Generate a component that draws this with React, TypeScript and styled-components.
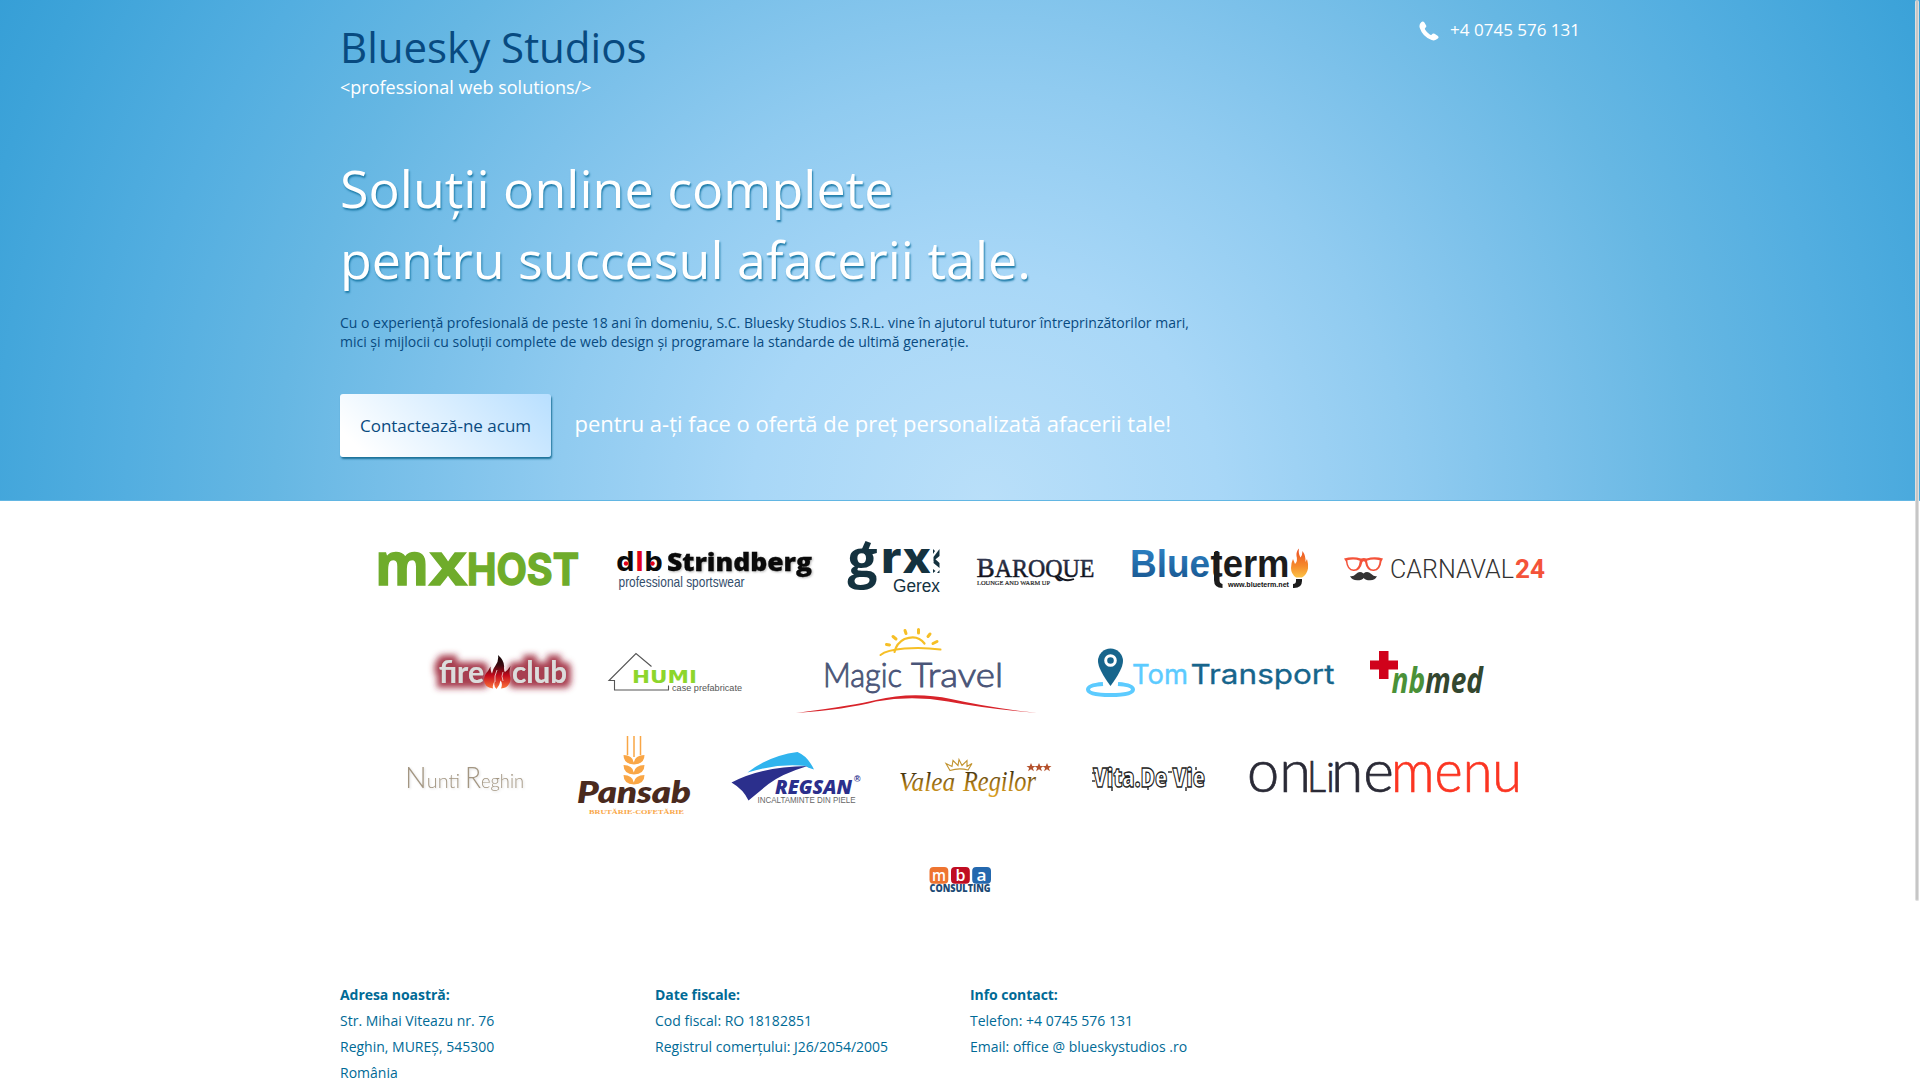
import React from "react";
import styled, { createGlobalStyle } from "styled-components";

const GlobalStyle = createGlobalStyle`
  *, *::before, *::after { box-sizing: border-box; }
  html, body { margin: 0; padding: 0; height: 100%; overflow: hidden; }
  body { font-family: "Open Sans", "Noto Sans", sans-serif; font-size: 14px; background: #fff; }
  h1, h2, h3, p, ul { margin: 0; padding: 0; font-weight: 400; }
`;

const Page = styled.div`
  height: 1080px;
  overflow: hidden;
  display: flex;
  flex-direction: column;
`;

const Container = styled.div`
  width: 1240px;
  margin: 0 auto;
`;

const Hero = styled.header`
  height: 501px;
  flex: none;
  border-bottom: 1px solid #62b6e3;
  background: radial-gradient(
    ellipse 1060px 1040px at 985px 500px,
    #b9dff9 0%,
    #a8d7f7 22%,
    #90cbf0 40%,
    #7cc1ea 53%,
    #66b7e3 67%,
    #53aee0 81%,
    #3da3d9 98%,
    #359ed6 106%
  );
`;

const TopBar = styled.div`
  display: flex;
  justify-content: space-between;
  align-items: flex-start;
  padding-top: 18px;
`;

const Brand = styled.div`
  display: flex;
  flex-direction: column;
`;

const BrandName = styled.div`
  font-size: 42px;
  line-height: 57px;
  color: #084a80;
`;

const Tagline = styled.div`
  font-size: 18px;
  line-height: 25px;
  color: #fff;
`;

const Phone = styled.div`
  display: flex;
  align-items: center;
  gap: 11px;
  font-size: 17px;
  line-height: 23px;
  color: #fff;
`;

const PhoneIcon = styled.svg`
  width: 20px;
  height: 20px;
  margin-top: 3px;
`;

const Headline = styled.h1`
  margin-top: 52px;
  font-size: 52px;
  line-height: 71px;
  color: #fff;
  text-shadow: 1px 2px 2px #1d7ba8;
`;

const Intro = styled.p`
  margin-top: 19px;
  font-size: 14px;
  line-height: 19px;
  color: #084a80;
`;

const Action = styled.div`
  display: flex;
  align-items: center;
  gap: 23.5px;
  margin-top: 43px;
`;

const ContactButton = styled.a`
  display: flex;
  align-items: center;
  justify-content: center;
  width: 211px;
  height: 63px;
  border-radius: 3px;
  font-size: 17px;
  color: #084a80;
  background: linear-gradient(45deg, #fff 10%, #b8dfff 100%);
  box-shadow: 1px 2px 2px #1c7198;
`;

const ActionText = styled.span`
  font-size: 22px;
  line-height: 30px;
  color: #fff;
  padding-bottom: 5px;
`;

const Clients = styled.section`
  display: flex;
  flex-direction: column;
  padding-top: 16px;
`;

const LogoRow = styled.div`
  display: flex;
  justify-content: center;
  gap: 35px;
  height: 104px;
`;

const Logo = styled.svg`
  display: block;
  flex: none;
  height: 104px;
  overflow: visible;
`;

const Footer = styled.footer`
  display: flex;
  padding-top: 49px;
  color: #006a96;
`;

const FooterColumn = styled.div`
  width: 315px;
  display: flex;
  flex-direction: column;
  line-height: 26px;
  font-size: 14px;
  white-space: nowrap;
`;

const FooterTitle = styled.h3`
  font-size: 14px;
  line-height: 26px;
  font-weight: 700;
  letter-spacing: -0.05px;
`;

const ScrollThumb = styled.div`
  position: fixed;
  top: 0;
  right: 1px;
  width: 4px;
  height: 901px;
  border-radius: 2px;
  background: #c6c6c6;
  border: 1px solid #dedede;
  border-top: 0;
`;

type WordProps = React.SVGProps<SVGTextElement> & { w: number; size: number; font?: string };

/* A word of a logo, fitted to the width w. */
const Word = ({ w, size, font = "Open Sans", children, ...rest }: WordProps) => (
  <text fontFamily={`"${font}", sans-serif`} fontSize={size} textLength={w} lengthAdjust="spacingAndGlyphs" {...rest}>
    {children}
  </text>
);

const MxHost = () => (
  <Logo width={205} viewBox="376 517 205 104">
    <g fill="#6fac2b" stroke="#6fac2b" strokeWidth="1.4">
      <Word x={375} y={585} w={54} size={58.500} fontWeight={700}>m</Word>
      <Word x={428} y={585} w={40} size={44} font="Inter" fontWeight={800}>X</Word>
      <Word x={467} y={585} w={112} size={44} font="Inter" fontWeight={700}>HOST</Word>
    </g>
  </Logo>
);

const Strindberg = () => (
  <Logo width={197} viewBox="616 517 197 104">
    <Word x={616} y={571} w={47} size={27} fontWeight={700} fill="#0a0a0a">
      d<tspan fill="#e2001a">l</tspan>b
    </Word>
    <circle cx="626" cy="563.5" r="2.2" fill="#e2001a" />
    <circle cx="652.5" cy="563.5" r="2.2" fill="#e2001a" />
    <Word x={667} y={570.5} w={145} size={25} fontWeight={800} fill="#0a0a0a" stroke="#0a0a0a" strokeWidth={0.3}
      style={{ filter: "drop-shadow(1px 1px 1px #bbb)" }}>
      Strindberg
    </Word>
    <Word x={618.5} y={587} w={126} size={14.5} font="Liberation Sans" fill="#344e6c">professional sportswear</Word>
  </Logo>
);

const Gerex = () => (
  <Logo width={93} viewBox="848 517 93 104">
    <g fill="#14323f">
      <Word x={847.5} y={577} w={30} size={52} fontWeight={700}>g</Word>
      <path d="M861 551l4.500-10 5.500 2-3.500 9z" />
      <Word x={881} y={573} w={50} size={44} font="Inter" fontWeight={800}>rx</Word>
      <path d="M933 549l2 2-2 3zM939.500 549v7l-6 5v-4zM934 558l5.500 5v5l-6-5zM933 573v-4l2.500 2zM937 573h2.500v-3z" />
      <Word x={893} y={591.5} w={47} size={18} font="Liberation Sans">Gerex</Word>
    </g>
  </Logo>
);

const Baroque = () => (
  <Logo width={120} viewBox="976 517 120 104">
    <defs>
      <linearGradient id="baroque" x1="0" y1="0" x2="0" y2="1">
        <stop offset="0.2" stopColor="#39405e" />
        <stop offset="0.8" stopColor="#0c0c10" />
      </linearGradient>
    </defs>
    <Word x={976.5} y={577} w={118} size={28} font="Liberation Serif" fill="url(#baroque)" stroke="#222638" strokeWidth={0.5}>
      B<tspan fontSize="24.5">AROQUE</tspan>
    </Word>
    <path d="M1058 576q7 6.500 16 3" fill="none" stroke="#16171f" strokeWidth="1.800" />
    <Word x={977} y={584.8} w={73} size={7} font="Liberation Serif" fill="#222" stroke="#222" strokeWidth={0.2}>LOUNGE AND WARM UP</Word>
  </Logo>
);

const Blueterm = () => (
  <Logo width={178} viewBox="1131 517 178 104">
    <defs>
      <linearGradient id="btBlue" x1="0" y1="0" x2="0" y2="1">
        <stop offset="0.1" stopColor="#2f83c5" />
        <stop offset="0.9" stopColor="#185690" />
      </linearGradient>
      <linearGradient id="btFlame" x1="0" y1="0" x2="0" y2="1">
        <stop offset="0" stopColor="#ec4e23" />
        <stop offset="0.6" stopColor="#f58a2c" />
        <stop offset="1" stopColor="#fcc244" />
      </linearGradient>
    </defs>
    <Word x={1130} y={577} w={80} size={38.5} font="Liberation Sans" fontWeight={700} fill="url(#btBlue)">Blue</Word>
    <Word x={1210.5} y={577} w={79} size={38} font="Liberation Sans" fontWeight={700} fill="#1c1c1c">term</Word>
    <path d="M1214 552h5.500v28q0 3.500 3 4v4q-8.500 0-8.500-8z" fill="#1c1c1c" />
    <Word x={1228} y={587} w={61} size={8} font="Liberation Sans" fontWeight={700} fill="#111">www.blueterm.net</Word>
    <path d="M1296 579h6v2q0 7-8 7h-1v-4q3 0 3-3z" fill="#1c1c1c" />
    <path d="M1296 577.500q-5-3.500-5-9.500 0-5 2-9l2 5q3-3 1.500-8-.5-4.500 2.500-7.500-1 5 1.500 9 2-2.500 2-6.500 3.500 5 3 11l1.500-3q1.500 5 1 9.500-1 6-6 9z" fill="url(#btFlame)" />
  </Logo>
);

const Carnaval = () => (
  <Logo width={200} viewBox="1344.5 517 200 104">
    <path
      d="M1344.500 558.500q9-2.500 17 0 3-1 5.500 0 8-2.500 16.500 0l-1.500 3q-1 9-7.500 9.500-7.500.5-9-9-1.300-1.500-2.600 0-2 9.500-9 9-6.500-.5-7.500-9.500z"
      fill="#f4533a"
    />
    <path d="M1347.800 560.300q7-2 12.500.5-1 8.700-6 8.700-6 0-6.500-9.200zM1367.500 560.800q6-2.500 12.700-.5-.6 9.200-6.500 9.200-5 0-6.200-8.700z" fill="#fff" />
    <path d="M1364 573.500q-4-3-7.500.5-3 3-6 2 2 4.300 7.200 4.300 5 0 6.500-2.300 1.500 2.300 6.500 2.300 5 0 6.800-4.300-2.500 1-5.700-2-4-3.500-7.800-.5z" fill="#333" />
    <Word x={1390.500} y={577.5} w={124} size={25.5} font="Roboto" fontWeight={300} fill="#333">CARNAVAL</Word>
    <Word x={1515.500} y={577.5} w={30} size={25.5} font="Roboto" fontWeight={700} fill="#f4533a">24</Word>
  </Logo>
);

const FireClub = () => (
  <Logo width={140} viewBox="433 621 140 104">
    <defs>
      <filter id="redGlow" x="-20%" y="-60%" width="140%" height="220%">
        <feMorphology in="SourceAlpha" operator="dilate" radius="5" />
        <feGaussianBlur stdDeviation="3" result="g" />
        <feFlood floodColor="#9c2438" floodOpacity="0.88" />
        <feComposite in2="g" operator="in" result="c" />
        <feMerge>
          <feMergeNode in="c" />
          <feMergeNode in="SourceGraphic" />
        </feMerge>
      </filter>
      <linearGradient id="fcFlame" x1="0" y1="0" x2="0" y2="1">
        <stop offset="0" stopColor="#0d0405" />
        <stop offset="0.3" stopColor="#3d0a10" />
        <stop offset="0.6" stopColor="#c40a1c" />
        <stop offset="1" stopColor="#ff7a3c" />
      </linearGradient>
    </defs>
    <g filter="url(#redGlow)" fill="#dcdcdc" fontWeight={700}>
      <Word x={439} y={682.5} w={45} size={30} font="Lato">fire</Word>
      <Word x={512} y={682.5} w={55} size={30} font="Lato">club</Word>
    </g>
    <path
      d="M498 655q7 6 6 13 0 3 1 4 3-2 5.500-6 -1.500 5-.5 10 1.500 4-1 8-2 4-8 4.500 2-5-.5-8-.5 4-4 8.500-3.500-3.500-1.500-8-3 3-2 7.500-9-1.500-9-8.500 0-5 4-9l2.500-4.500q0 5 1.500 7 1-5 3.500-8 3.500-5 2.500-10.500z"
      fill="url(#fcFlame)"
    />
    <path d="M497 670q-3 6-2 12M503 672q-2 4 0 9" fill="none" stroke="#e9c3c3" strokeWidth="0.9" />
  </Logo>
);

const Humi = () => (
  <Logo width={136} viewBox="608 621 136 104">
    <path d="M651.500 666.500L636 653.500 609 680.500h5.500v9.500h54v-4.500" fill="none" stroke="#555" strokeWidth="1.100" />
    <Word x={632} y={683} w={65} size={18.500} font="DejaVu Sans" fontWeight={700} fill="#8dd62c">HUMI</Word>
    <Word x={672} y={690.500} w={70} size={9} font="Liberation Sans" fill="#555">case prefabricate</Word>
  </Logo>
);

const MagicTravel = () => (
  <Logo width={271} viewBox="779 621 271 104">
    <g fill="none" stroke="#f6bf26" strokeLinecap="round">
      <path d="M894.500 652q2-9 10-13 13-5 20 4.500" strokeWidth="2.200" />
      <path d="M880.500 655q6-5 24-6.500 18-1.500 36 1" strokeWidth="2" />
      <path d="M886.500 644.500l3 .4M893 636.500l3 2.500M905 630.500l1 3M918.500 629.500v3.500M930 634l-2 2.500M937 641.500l-4 2" strokeWidth="3" />
    </g>
    <g fill="#4a5578" stroke="#4a5578" strokeWidth="0.9">
      <Word x={823} y={687} w={79} size={34} font="Lato" fontWeight={300}>Magic</Word>
      <Word x={911} y={687} w={92} size={34} font="Lato" fontWeight={300}>Travel</Word>
    </g>
    <path d="M796 713q60-8 80-13 37-9 75-1 40 9 87 14-50-4-90-11.500-36-6.500-72 0-30 8-80 11.500z" fill="#d8232a" />
  </Logo>
);

const TomTransport = () => (
  <Logo width={250} viewBox="1085 621 250 104">
    <path d="M1103 684q-15 1-15 5.500 0 5.500 22.500 5.500t22.500-5.500q0-4.500-15-5.500" fill="none" stroke="#5ccbff" strokeWidth="4" />
    <path d="M1110.500 686q-12.500-17-12.500-25a12.500 12.500 0 0 1 25 0q0 8-12.500 25z" fill="#17658c" />
    <circle cx="1110.500" cy="660.500" r="4.800" fill="#17658c" stroke="#fff" strokeWidth="3" />
    <Word x={1132} y={684} w={56} size={27.500} font="Inter" fill="#5ccbff" stroke="#5ccbff" strokeWidth={0.4}>Tom</Word>
    <Word x={1190.5} y={684} w={144} size={27.500} font="Inter" fill="#17658c" stroke="#17658c" strokeWidth={0.3}>Transport</Word>
  </Logo>
);

const NbMed = () => (
  <Logo width={117} viewBox="1370 621 117 104">
    <path d="M1379 651h9.500v9.500h9.500v9h-9.500v9.500h-9.500v-9.500h-9v-9h9z" fill="#d0021b" />
    <Word x={1391.5} y={693} w={91.500} size={35} fontStyle="italic" fontWeight={700}>
      <tspan fill="#4a9138">nb</tspan>
      <tspan fill="#33472f">med</tspan>
    </Word>
  </Logo>
);

const NuntiReghin = () => (
  <Logo width={142} viewBox="399 725 142 104">
    <g fill="#a39682" fontWeight={300} style={{ filter: "drop-shadow(1px 1px 1px #ddd)" }}>
      <Word x={405} y={788} w={55} size={20} font="Lato"><tspan fontSize="29">N</tspan>unti</Word>
      <Word x={465} y={788} w={59} size={20} font="Lato"><tspan fontSize="29">R</tspan>eghin</Word>
    </g>
  </Logo>
);

const Pansab = () => (
  <Logo width={117} viewBox="576 725 117 104">
    <path d="M627.500 736v19M634 736v21M640.500 736v19" stroke="#f9a646" strokeWidth="1.500" />
    <g fill="#f9a646">
      {[755, 765, 775].map((y) => (
        <path key={y} d={`M623.500 ${y}q9 0 10.300 7.500q1.200-7.500 10.700-7.500q0 9-10.500 9.500q-10.500-.5-10.500-9.500z`} />
      ))}
    </g>
    <Word x={577} y={803} w={114} size={31} font="Lato" fontStyle="italic" fontWeight={800} fill="#4a2a1e">Pansab</Word>
    <Word x={589} y={814} w={95} size={6.500} font="Liberation Serif" fontWeight={700} fill="#f9a646">BRUTĂRIE-COFETĂRIE</Word>
  </Logo>
);

const Regsan = () => (
  <Logo width={135} viewBox="728 725 135 104">
    <path d="M747.500 772.500q22-17 50-20.500 10 4 16.500 17.500-7-2-8-3.500-28-3-58.500 6.500z" fill="#30b4ee" />
    <path d="M731.500 782.500q30-16 76-16.500-26 8-39 18-10 8-20 16.500-5-11-17-18z" fill="#2b2f8c" />
    <Word x={775} y={793.500} w={77} size={19.500} fontWeight={800} fontStyle="italic" fill="#2b2f8c">REGSAN</Word>
    <Word x={854} y={782} w={6.500} size={8.500} font="Liberation Sans" fontWeight={700} fill="#2b2f8c">®</Word>
    <Word x={757.500} y={803} w={98} size={8.500} font="Liberation Sans" fill="#666">INCALTAMINTE DIN PIELE</Word>
  </Logo>
);

const ValeaRegilor = () => (
  <Logo width={156} viewBox="898 725 156 104">
    <defs>
      <linearGradient id="gold" x1="0" y1="0" x2="0" y2="1">
        <stop offset="0.2" stopColor="#3a2c0c" />
        <stop offset="0.6" stopColor="#a87612" />
        <stop offset="1" stopColor="#e0a526" />
      </linearGradient>
    </defs>
    <g fill="url(#gold)" fontStyle="italic">
      <Word x={899} y={791} w={56} size={28} font="Liberation Serif">Valea</Word>
      <Word x={963} y={791} w={73} size={30} font="Liberation Serif">Regilor</Word>
    </g>
    <path d="M950 770.500l-4-7 6 3 1-6 5 5 1-6 3 6 5-5 0 6 5-3-4 6.500q-9-2.500-18 .5z" fill="none" stroke="#c2932e" strokeWidth="1.100" />
    <path
      d="M1031 763l1.300 3h3.200l-2.600 2 1 3.200-2.900-1.900-2.900 1.900 1-3.200-2.600-2h3.200zM1039 763l1.300 3h3.200l-2.600 2 1 3.200-2.900-1.900-2.900 1.900 1-3.200-2.600-2h3.200zM1047 763l1.300 3h3.200l-2.600 2 1 3.200-2.900-1.900-2.900 1.900 1-3.200-2.600-2h3.200z"
      fill="#b5522d"
    />
  </Logo>
);

const VitaDeVie = () => (
  <Logo width={122} viewBox="1089 725 122 104">
    <Word x={1093} y={787} w={112} size={26} fontWeight={800} fill="#fff" stroke="#222" strokeWidth={1.3}>Vita.De Vie</Word>
    <path d="M1092 773h4M1092 781h3M1108 767v4M1112 787v4M1148 787v3M1168 772h4M1186 787v4M1196 767v3" stroke="#333" strokeWidth="1.500" />
  </Logo>
);

const OnlineMenu = () => (
  <Logo width={275} viewBox="1246 725 275 104">
    <g fontWeight={300} strokeWidth="0.7">
      <g fill="#2a2a36" stroke="#2a2a36">
        <Word x={1247} y={792} w={64} size={59} font="Lato">on</Word>
        <Word x={1307} y={792} w={19} size={43} font="Lato">L</Word>
        <Word x={1326} y={792} w={9} size={42} font="Lato">i</Word>
        <Word x={1331} y={792} w={63} size={59} font="Lato">ne</Word>
      </g>
      <Word x={1391} y={792} w={131} size={59} font="Lato" fill="#fb3522" stroke="#fb3522">menu</Word>
    </g>
  </Logo>
);

const MbaConsulting = () => (
  <Logo width={64} viewBox="928 829 64 104">
    <rect x="929.500" y="867" width="18.800" height="16.800" rx="4" fill="#ee7430" />
    <rect x="951" y="867" width="18.800" height="16.800" rx="4" fill="#c00d22" />
    <rect x="972.200" y="867" width="18.800" height="16.800" rx="4" fill="#2468ae" />
    <g fill="#fff" fontWeight={600}>
      <Word x={932} y={880.500} w={14} size={16}>m</Word>
      <Word x={955.500} y={880.500} w={10} size={16}>b</Word>
      <Word x={976.500} y={880.500} w={10} size={16}>a</Word>
    </g>
    <Word x={929.500} y={891.500} w={61} size={9.800} fontWeight={800} fill="#1c4a75">CONSULTING</Word>
  </Logo>
);

const columns = [
  { title: "Adresa noastră:", lines: ["Str. Mihai Viteazu nr. 76", "Reghin, MUREȘ, 545300", "România"] },
  { title: "Date fiscale:", lines: ["Cod fiscal: RO 18182851", "Registrul comerțului: J26/2054/2005"] },
  { title: "Info contact:", lines: ["Telefon: +4 0745 576 131", "Email: office @ blueskystudios .ro"] },
];

export default function App() {
  return (
    <Page>
      <GlobalStyle />
      <Hero>
        <Container>
          <TopBar>
            <Brand>
              <BrandName>Bluesky Studios</BrandName>
              <Tagline>&lt;professional web solutions/&gt;</Tagline>
            </Brand>
            <Phone>
              <PhoneIcon viewBox="0 0 20 20">
                <path d="M2.200 1.200Q4-.6 5.400 1.600l1.600 2.600q.9 1.600-.6 2.600-1 .8-.2 2 1.800 3 4.600 4.800 1.200.8 2-.2 1.200-1.500 2.800-.6l3 1.900q1.800 1.300.2 2.900-2.600 2.600-6.200 1.400Q3.600 15.800.7 6.800-.2 3.600 2.200 1.200z" fill="#fff" />
              </PhoneIcon>
              <span>+4 0745 576 131</span>
            </Phone>
          </TopBar>
          <Headline>
            Soluții online complete
            <br />
            pentru succesul afacerii tale.
          </Headline>
          <Intro>
            Cu o experiență profesională de peste 18 ani în domeniu, S.C. Bluesky Studios S.R.L. vine în ajutorul tuturor întreprinzătorilor mari,
            <br />
            mici și mijlocii cu soluții complete de web design și programare la standarde de ultimă generație.
          </Intro>
          <Action>
            <ContactButton>Contactează-ne acum</ContactButton>
            <ActionText>pentru a-ți face o ofertă de preț personalizată afacerii tale!</ActionText>
          </Action>
        </Container>
      </Hero>
      <Container>
        <Clients>
          <LogoRow>
            <MxHost />
            <Strindberg />
            <Gerex />
            <Baroque />
            <Blueterm />
            <Carnaval />
          </LogoRow>
          <LogoRow>
            <FireClub />
            <Humi />
            <MagicTravel />
            <TomTransport />
            <NbMed />
          </LogoRow>
          <LogoRow>
            <NuntiReghin />
            <Pansab />
            <Regsan />
            <ValeaRegilor />
            <VitaDeVie />
            <OnlineMenu />
          </LogoRow>
          <LogoRow>
            <MbaConsulting />
          </LogoRow>
        </Clients>
        <Footer>
          {columns.map((c) => (
            <FooterColumn key={c.title}>
              <FooterTitle>{c.title}</FooterTitle>
              {c.lines.map((l) => (
                <span key={l}>{l}</span>
              ))}
            </FooterColumn>
          ))}
        </Footer>
      </Container>
      <ScrollThumb />
    </Page>
  );
}
